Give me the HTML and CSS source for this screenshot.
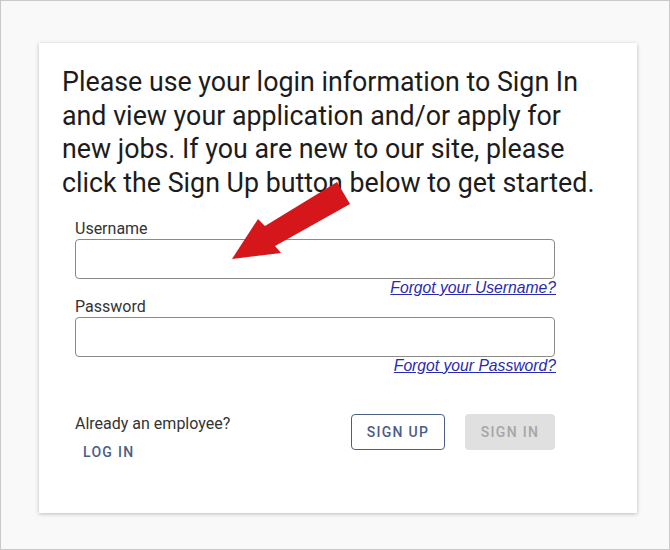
FILE: index.html
```html
<!DOCTYPE html>
<html lang="en">
<head>
    <meta charset="UTF-8">
    <title>Sign In</title>
    <link rel="stylesheet" href="styles.css">
</head>
<body>
    <div class="frame">
        <div class="card">
            <p class="intro">Please use your login information to Sign In and view your application and/or apply for new jobs. If you are new to our site, please click the Sign Up button below to get started.</p>

            <div class="login-form">
                <div class="form-group">
                    <label for="username">Username</label>
                    <input type="text" id="username">
                    <a href="#" class="forgot">Forgot your Username?</a>
                </div>

                <div class="form-group">
                    <label for="password">Password</label>
                    <input type="password" id="password">
                    <a href="#" class="forgot">Forgot your Password?</a>
                </div>

                <div class="actions">
                    <div class="employee">
                        <span>Already an employee?</span>
                        <button class="text-button">Log In</button>
                    </div>
                    <div class="buttons">
                        <button class="outline-button">Sign Up</button>
                        <button class="filled-button" disabled>Sign In</button>
                    </div>
                </div>
            </div>

            <!-- red pointer drawn over the form -->
            <svg class="arrow" width="130" height="90" viewBox="0 0 130 90">
                <polygon points="2,88 28,48 35,55 107,11 120,33 45,75 51,82" fill="#d5161b"/>
            </svg>
        </div>
    </div>
</body>
</html>
```

FILE: styles.css
```css
body {
    margin: 0;
    font-family: Roboto, 'Liberation Sans', sans-serif;
    color: #222;
}

.frame {
    width: 670px;
    height: 550px;
    box-sizing: border-box;
    border: 1px solid #c9c9c9;
    background-color: #f9f9f9;
    padding: 42px 0 0 38px;
}

.card {
    position: relative;
    width: 598px;
    height: 470px;
    box-sizing: border-box;
    background: white;
    box-shadow: 0 1px 4px rgba(0, 0, 0, 0.25);
    padding: 23px 35px 0 23px;
}

.intro {
    margin: 0;
    font-size: 26.8px;
    line-height: 33.5px;
    color: #1c1c1c;
}

.login-form {
    width: 480px;
    margin: 19px 0 0 13px;
}

.form-group {
    display: flex;
    flex-direction: column;
}

.form-group label {
    font-size: 16px;
    line-height: 20px;
    color: #333;
}

.form-group input {
    height: 40px;
    box-sizing: border-box;
    border: 1px solid #8a8a8a;
    border-radius: 4px;
    padding: 0 10px;
    font-size: 16px;
}

.forgot {
    align-self: flex-end;
    margin-right: -1px;
    font-family: 'Liberation Sans', Arial, sans-serif;
    font-style: italic;
    font-size: 15.7px;
    line-height: 18px;
    color: #2a2ab0;
}

.actions {
    display: flex;
    justify-content: space-between;
    margin-top: 39px;
}

.employee {
    display: flex;
    flex-direction: column;
    align-items: flex-start;
    padding-top: 1px;
    font-size: 16px;
    color: #333;
}

.employee span {
    line-height: 18px;
}

button {
    font-family: Roboto, 'Liberation Sans', sans-serif;
    font-size: 14px;
    font-weight: 500;
    letter-spacing: 1.3px;
    text-transform: uppercase;
    border-radius: 4px;
    height: 36px;
    cursor: pointer;
}

.text-button {
    background: none;
    border: none;
    padding: 0 8px;
    height: 28px;
    margin-top: 5px;
    color: #4b5e85;
}

.buttons {
    display: flex;
    gap: 20px;
}

.outline-button {
    width: 94px;
    background: white;
    border: 1px solid #4b5e85;
    color: #4b5e85;
}

.filled-button {
    width: 90px;
    background-color: #e0e0e0;
    border: none;
    color: #a6a6a6;
}

.arrow {
    position: absolute;
    left: 191px;
    top: 128px;
}
```
